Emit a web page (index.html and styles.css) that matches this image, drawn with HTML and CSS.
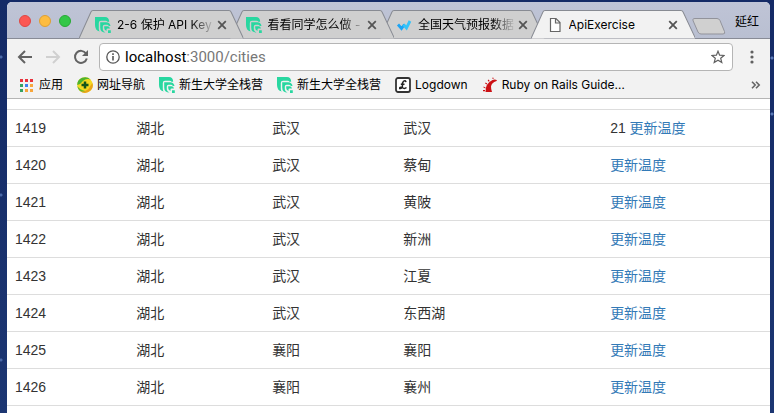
FILE: index.html
```html
<!DOCTYPE html>
<html lang="zh-CN">
<head>
<meta charset="utf-8">
<title>ApiExercise</title>
<link rel="stylesheet" href="styles.css">
</head>
<body>
<svg class="defs" aria-hidden="true">
  <symbol id="tab" viewBox="0 0 164 29" preserveAspectRatio="none"><path d="M0 28.5L12 1.8Q12.500 .5 14 .5H149.500Q151 .5 151.500 1.800L164 28.500"/></symbol>
  <symbol id="leaf" viewBox="0 0 16 16"><path fill="#28d7a0" d="M0 0H10Q14 0 14.200 4.800H12.500Q12 3.800 10.500 3.800H6Q3.800 3.800 3.800 6V12Q3.800 13.500 4.800 14.500Q0 13.500 0 8Z"/><path fill="#28d7a0" d="M5.200 5.200H11Q15 5.300 15.500 9H13.800Q13.300 7.800 12 7.800H9.500Q7.800 7.800 7.800 9.500V12.500Q8 14.500 10.500 15.500Q5.200 15.500 5.200 10.500Z"/><path fill="#28d7a0" d="M9.200 9.200H12.500Q14.500 9.300 15 11.500H12.500Q11.500 11.500 11.500 12.500V14Q9.200 13 9.200 11ZM13 13.300H15.800V16H13Z"/></symbol>
  <symbol id="close" viewBox="0 0 10 10"><path d="M1.200 1.200L8.800 8.800M8.800 1.200L1.200 8.800" stroke="#555" stroke-width="1.800"/></symbol>
</svg>
<div class="window">
  <header class="tabstrip">
    <div class="lights"><button class="light red" aria-label="关闭"></button><button class="light yellow" aria-label="最小化"></button><button class="light green" aria-label="缩放"></button></div>
    <nav class="tabs">
      <div class="tab first"><svg class="shape"><use href="#tab"/></svg><svg class="icon"><use href="#leaf"/></svg><a class="title" href="#">2-6 保护 API Key</a><button class="close" aria-label="关闭标签"><svg><use href="#close"/></svg></button></div>
      <div class="tab second"><svg class="shape"><use href="#tab"/></svg><svg class="icon"><use href="#leaf"/></svg><a class="title" href="#">看看同学怎么做 -</a><button class="close" aria-label="关闭标签"><svg><use href="#close"/></svg></button></div>
      <div class="tab third"><svg class="shape"><use href="#tab"/></svg><svg class="icon" viewBox="0 0 16 16"><path d="M2 7.500L5.500 11.500L8.500 7.500" fill="none" stroke="#1ba4f4" stroke-width="2.800"/><path d="M7.500 7.500L10.500 11L14 4" fill="none" stroke="#35c3f8" stroke-width="2.800"/></svg><a class="title" href="#">全国天气预报数据</a><button class="close" aria-label="关闭标签"><svg><use href="#close"/></svg></button></div>
      <div class="tab active"><svg class="shape"><use href="#tab"/></svg><svg class="icon" viewBox="0 0 16 16"><path d="M3.500 1.500H9L13 5.500V14.500H3.500ZM8.500 1.500V6H13" fill="#fff" stroke="#666" stroke-width="1.200"/></svg><a class="title plain" href="#">ApiExercise</a><button class="close" aria-label="关闭标签"><svg><use href="#close"/></svg></button></div>
    </nav>
    <button class="newtab" aria-label="新标签页"><svg viewBox="0 0 34 17"><path d="M3 .5H25Q27 .5 28 2.500L32.500 13.500Q33.500 16 31 16H9Q7 16 6 14L1.200 3Q0 .5 3 .5Z" fill="#d0d0d0" stroke="#92939b"/></svg></button>
    <button class="profile">延红</button>
  </header>
  <div class="toolbar">
    <button class="tool" aria-label="后退"><svg viewBox="0 0 16 16"><path d="M15 8H2M8 2L2 8L8 14" stroke="#636363"/></svg></button>
    <button class="tool" aria-label="前进"><svg viewBox="0 0 16 16"><path d="M1 8H14M8 2L14 8L8 14" stroke="#d0d0d0"/></svg></button>
    <button class="tool" aria-label="重新加载"><svg viewBox="0 0 16 16"><path d="M13 4.500A6 6 0 1 0 13.800 9.500" stroke="#636363"/><path d="M15 1V7H9Z" fill="#636363"/></svg></button>
    <div class="address">
      <svg class="info" viewBox="0 0 14 14"><circle cx="7" cy="7" r="6.200" fill="none" stroke="#555" stroke-width="1.300"/><path d="M7 6V10.500M7 3.300V4.900" stroke="#555" stroke-width="1.600"/></svg>
      <div class="url" role="textbox" aria-label="地址" contenteditable="true" spellcheck="false">localhost<span>:3000/cities</span></div>
      <button class="star" aria-label="收藏"><svg viewBox="0 0 14 14"><path d="M7 1.200L8.600 5.200L13 5.500L9.700 8.300L10.800 12.600L7 10.300L3.200 12.600L4.300 8.300L1 5.500L5.400 5.200Z" fill="none" stroke="#606060" stroke-width="1.200"/></svg></button>
    </div>
    <button class="menu" aria-label="菜单"><svg viewBox="0 0 4 14"><circle cx="2" cy="2" r="1.600"/><circle cx="2" cy="7" r="1.600"/><circle cx="2" cy="12" r="1.600"/></svg></button>
  </div>
  <nav class="bookmarks">
    <a href="#"><svg class="icon" viewBox="0 0 16 16"><path fill="#e8323c" d="M1 2h3v3H1zM6 2h3v3H6zM11 2h3v3h-3z"/><path fill="#35a262" d="M1 7h3v3H1zM1 12h3v3H1z"/><path fill="#3d82f0" d="M6 7h3v3H6z"/><path fill="#f8a63b" d="M11 7h3v3h-3zM6 12h3v3H6zM11 12h3v3h-3z"/></svg>应用</a>
    <a href="#"><svg class="icon" viewBox="0 0 16 16"><circle cx="8" cy="8" r="7.800" fill="#f5d81f"/><path d="M.2 8A7.800 7.800 0 0 1 13.500 2.500Q9 1 6 4Q4 7 .2 8Z" fill="#4db32e"/><path d="M15.500 6A7.800 7.800 0 0 1 3 14Q8 15 11.500 12Q13 9 15.500 6Z" fill="#e9a41b"/><path d="M.3 9A7.800 7.800 0 0 0 3 14Q6 15 8 14Q3 13 .3 9Z" fill="#62b82f"/><path d="M8 4.500V11.500M4.500 8H11.500" stroke="#14551a" stroke-width="2.500"/></svg>网址导航</a>
    <a href="#"><svg class="icon"><use href="#leaf"/></svg>新生大学全栈营</a>
    <a href="#"><svg class="icon"><use href="#leaf"/></svg>新生大学全栈营</a>
    <a href="#"><svg class="icon" viewBox="0 0 16 16"><rect x="1" y="1" width="14" height="14" rx="2" fill="#fff" stroke="#333" stroke-width="1.800"/><path d="M11 5.200Q10.500 2.800 8.500 4.300Q7 6 7.500 8Q7.500 12 4.700 11.500Q4.200 9.700 7 10.500Q9.500 12.300 11.500 10.500M5.800 7.300H9.500" fill="none" stroke="#222" stroke-width="1.500"/></svg>Logdown</a>
    <a href="#"><svg class="icon" viewBox="0 0 16 16"><path d="M3.500 15Q3.500 6 10.500 3Q13 2 15 3.300L14.500 4Q9.500 5.500 9 9.500Q9 12.500 10 15Z" fill="#cc1014"/><path d="M1 13h2v1.200H1zM1.500 9.500l2 1v1l-2-1zM3.500 5.500l1.800 1-.7 1-1.500-1zM6.500 2.500l1.200 1.500-1 .7-1-1.500zM10.500 .5l1 .2v1.300h-1z" fill="#cc1014"/></svg>Ruby on Rails Guide…</a>
    <button class="more" aria-label="更多书签"><svg viewBox="0 0 10 8"><path d="M1 .8L4.200 4L1 7.200M5 .8L8.200 4L5 7.200" fill="none" stroke="#666" stroke-width="1.600"/></svg></button>
  </nav>
  <main class="page">
    <table>
      <colgroup><col class="c-id"><col class="c-province"><col class="c-city"><col class="c-district"><col class="c-temp"></colgroup>
      <tbody>
        <tr><td>1419</td><td>湖北</td><td>武汉</td><td>武汉</td><td>21 <a href="#">更新温度</a></td></tr>
        <tr><td>1420</td><td>湖北</td><td>武汉</td><td>蔡甸</td><td><a href="#">更新温度</a></td></tr>
        <tr><td>1421</td><td>湖北</td><td>武汉</td><td>黄陂</td><td><a href="#">更新温度</a></td></tr>
        <tr><td>1422</td><td>湖北</td><td>武汉</td><td>新洲</td><td><a href="#">更新温度</a></td></tr>
        <tr><td>1423</td><td>湖北</td><td>武汉</td><td>江夏</td><td><a href="#">更新温度</a></td></tr>
        <tr><td>1424</td><td>湖北</td><td>武汉</td><td>东西湖</td><td><a href="#">更新温度</a></td></tr>
        <tr><td>1425</td><td>湖北</td><td>襄阳</td><td>襄阳</td><td><a href="#">更新温度</a></td></tr>
        <tr><td>1426</td><td>湖北</td><td>襄阳</td><td>襄州</td><td><a href="#">更新温度</a></td></tr>
      </tbody>
    </table>
  </main>
</div>
</body>
</html>
```
FILE: styles.css
```css
* { box-sizing: border-box; }
body {
  margin: 0;
  height: 100vh;
  padding: 2px 4px 0 7px;
  overflow: hidden;
  background:
    radial-gradient(circle at 1px 57px, #4a69a8 0 1px, transparent 2px),
    radial-gradient(circle at 1px 195px, #4a69a8 0 1px, transparent 2px),
    radial-gradient(circle at 1px 360px, #4a69a8 0 1px, transparent 2px),
    radial-gradient(circle at calc(100% - 2px) 58px, #5a79b8 0 1px, transparent 2px),
    radial-gradient(circle at calc(100% - 2px) 114px, #5a79b8 0 1px, transparent 2px),
    linear-gradient(#142a66, #1c3672);
  font: 12px/16px Inter, "Noto Sans CJK SC", sans-serif;
  color: #000;
}
button { border: 0; padding: 0; background: none; font: inherit; color: inherit; }
a { color: inherit; text-decoration: none; }
svg { display: block; }
.defs { position: absolute; width: 0; height: 0; }
.window {
  display: flex;
  flex-direction: column;
  height: 100%;
  border-radius: 5px 5px 0 0;
  overflow: hidden;
  background: #fff;
}
.tabstrip {
  display: flex;
  align-items: flex-end;
  height: 37px;
  flex: none;
  background: linear-gradient(#bfc4d6, #b9bfd1);
  box-shadow: inset 0 -1px #888b96;
}
.lights { display: flex; gap: 8px; width: 72px; padding: 0 0 12px 12px; flex: none; }
.light { width: 12px; height: 12px; border-radius: 50%; }
.red { background: #fc5753; border: 1px solid #df4744; }
.yellow { background: #fdbc40; border: 1px solid #de9f34; }
.green { background: #33c748; border: 1px solid #27aa35; }
.tabs { display: flex; flex: 0 1 616px; min-width: 0; }
.tab {
  position: relative;
  display: flex;
  align-items: center;
  flex: 1 1 0;
  min-width: 0;
  height: 29px;
  padding: 0 17px 0 16px;
  margin-right: -14px;
}
.tab:last-child { margin-right: 0; }
.first { z-index: 3; }
.second { z-index: 2; }
.third { z-index: 1; }
.active { z-index: 4; }
.shape {
  position: absolute;
  inset: 0;
  width: 100%;
  height: 100%;
  z-index: -1;
  fill: #cfcfcf;
  stroke: #888b93;
}
.active .shape { fill: #f2f2f2; }
.icon { width: 16px; height: 16px; flex: none; }
.title {
  flex: 1;
  min-width: 0;
  margin: 0 2px 0 6px;
  overflow: hidden;
  white-space: nowrap;
  mask-image: linear-gradient(to right, #000 calc(100% - 24px), transparent);
}
.plain { mask-image: none; }
.close svg { width: 10px; height: 10px; }
.newtab { width: 34px; height: 17px; margin: 0 0 4px -3px; flex: none; }
.profile { margin: 0 11px 9px auto; white-space: nowrap; }
.toolbar {
  display: flex;
  align-items: center;
  height: 35px;
  flex: none;
  padding: 0 16px 0 10px;
  background: #f2f2f2;
}
.tool { width: 16px; margin-right: 12px; }
.tool:nth-child(3) { margin-right: 10px; }
.tool svg { width: 16px; height: 16px; fill: none; stroke-width: 2; }
.address {
  display: flex;
  align-items: center;
  flex: 1;
  min-width: 0;
  height: 28px;
  margin-right: 17px;
  padding: 0 7px 0 6px;
  border: 1px solid #b5b5b5;
  border-radius: 4px;
  background: #fff;
}
.info, .star svg { width: 14px; height: 14px; }
.url {
  flex: 1;
  margin-left: 5px;
  font: 15px/20px Roboto, sans-serif;
  outline: none;
}
.url span { color: #777; }
.menu svg { width: 4px; height: 14px; fill: #606060; }
.bookmarks {
  display: flex;
  align-items: center;
  height: 25px;
  flex: none;
  padding: 0 9px 2px 12px;
  border-bottom: 1px solid #b5b5b5;
  background: #f2f2f2;
  white-space: nowrap;
}
.bookmarks a { display: flex; align-items: center; gap: 4px; margin-right: 14px; }
.more { margin-left: auto; }
.more svg { width: 10px; height: 8px; }
.page {
  flex: 1;
  min-height: 0;
  padding-top: 10px;
  overflow: hidden;
  font: 14px/20px "Liberation Sans", "Noto Sans CJK SC", sans-serif;
  color: #333;
}
table { width: 100%; table-layout: fixed; border-collapse: separate; border-spacing: 0; }
td { padding: 8px; height: 37px; border-top: 1px solid #ddd; white-space: nowrap; line-height: 20px; }
tr:last-child td { height: 38px; border-bottom: 1px solid #ddd; }
td a { color: #337ab7; }
.c-id { width: 15.9%; }
.c-province { width: 17.8%; }
.c-city { width: 17.2%; }
.c-district { width: 27.1%; }
.c-temp { width: 22%; }
```
